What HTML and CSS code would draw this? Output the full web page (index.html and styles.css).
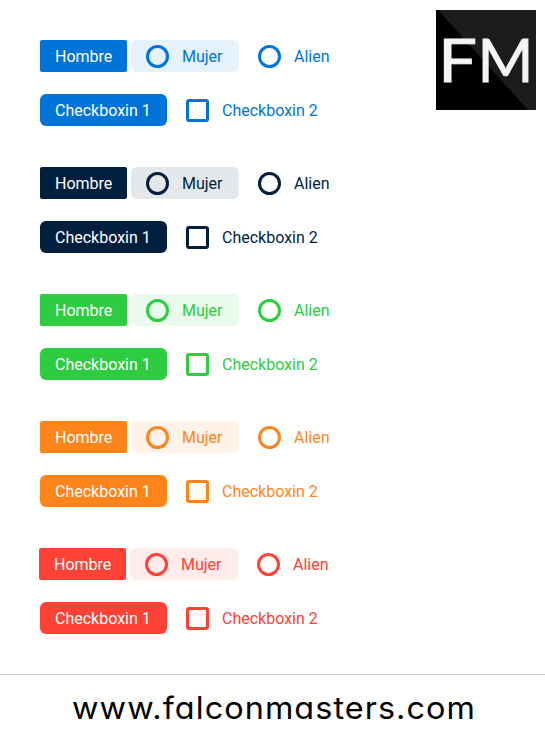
FILE: index.html
```
<!DOCTYPE html>
<html lang="es">
<head>
<meta charset="utf-8">
<title>FalconMasters</title>
<link rel="stylesheet" href="styles.css">
</head>
<body>
<svg class="logo" width="100" height="100" viewBox="0 0 100 100" role="img" aria-label="FM">
  <rect width="100" height="100" fill="#1c1c1c"/>
  <path d="M0 0H2L92 100H0Z" fill="#000"/>
  <text class="logo-text" x="2" y="71.5" textLength="39" lengthAdjust="spacingAndGlyphs">F</text>
  <text class="logo-text" x="41.5" y="71.5" textLength="56" lengthAdjust="spacingAndGlyphs">M</text>
</svg>
<main class="groups">
  <section class="group blue">
    <div class="row"><span class="option radio selected">Hombre</span><span class="option radio hover"><i class="mark"></i>Mujer</span><span class="option radio"><i class="mark"></i>Alien</span></div>
    <div class="row"><span class="option check selected">Checkboxin 1</span><span class="option check"><i class="mark"></i>Checkboxin 2</span></div>
  </section>
  <section class="group navy">
    <div class="row"><span class="option radio selected">Hombre</span><span class="option radio hover"><i class="mark"></i>Mujer</span><span class="option radio"><i class="mark"></i>Alien</span></div>
    <div class="row"><span class="option check selected">Checkboxin 1</span><span class="option check"><i class="mark"></i>Checkboxin 2</span></div>
  </section>
  <section class="group green">
    <div class="row"><span class="option radio selected">Hombre</span><span class="option radio hover"><i class="mark"></i>Mujer</span><span class="option radio"><i class="mark"></i>Alien</span></div>
    <div class="row"><span class="option check selected">Checkboxin 1</span><span class="option check"><i class="mark"></i>Checkboxin 2</span></div>
  </section>
  <section class="group orange">
    <div class="row"><span class="option radio selected">Hombre</span><span class="option radio hover"><i class="mark"></i>Mujer</span><span class="option radio"><i class="mark"></i>Alien</span></div>
    <div class="row"><span class="option check selected">Checkboxin 1</span><span class="option check"><i class="mark"></i>Checkboxin 2</span></div>
  </section>
  <section class="group red">
    <div class="row"><span class="option radio selected">Hombre</span><span class="option radio hover"><i class="mark"></i>Mujer</span><span class="option radio"><i class="mark"></i>Alien</span></div>
    <div class="row"><span class="option check selected">Checkboxin 1</span><span class="option check"><i class="mark"></i>Checkboxin 2</span></div>
  </section>
</main>
<footer class="footer"><span class="site">www.falconmasters.com</span></footer>
</body>
</html>
```
FILE: styles.css
```
* { box-sizing: border-box; }
body {
  margin: 0;
  height: 740px;
  overflow: hidden;
  background: #fff;
  font: 16px/32px Roboto, sans-serif;
  display: flex;
  flex-direction: column;
}
.logo { position: absolute; top: 10px; right: 9px; }
.logo-text { font: 400 60px Lato, sans-serif; fill: #f4f4f4; stroke: #f4f4f4; stroke-width: 0.8px; }
.groups {
  height: 674px;
  padding: 40px 40px 0;
  display: flex;
  flex-direction: column;
  gap: 41px;
}
.group { display: flex; flex-direction: column; gap: 22px; color: var(--main); }
.row { display: flex; gap: 4px; height: 32px; line-height: 30px; }
.option {
  display: flex;
  align-items: center;
  gap: 13px;
  padding: 2px 15px 0;
  border-radius: 6px;
  white-space: nowrap;
}
.radio.selected { width: 87px; border-radius: 2px; }
.radio.hover { width: 108px; background: var(--tint); }
.check.selected { width: 127px; }
.selected { background: var(--main); color: #fff; }
.mark { width: 23px; height: 23px; margin-top: -1px; border: 3px solid var(--main); flex: none; }
.radio .mark { border-radius: 50%; }
.check .mark { border-radius: 3px; background: #fff; }
.blue { --main: #0074d9; --tint: #e5f1fb; }
.navy { --main: #001f3f; --tint: #e5e8eb; }
.green { --main: #2ecc40; --tint: #eafaec; }
.orange { --main: #ff851b; --tint: #fff2e8; }
.red { --main: #ff4136; --tint: #ffecea; }
.red .row:first-child { margin-left: -1px; }
.footer {
  height: 66px;
  border-top: 1px solid #ced2d7;
  padding-left: 72px;
  font: 400 31px/65px Inter, sans-serif;
  font-feature-settings: "cv11";
  letter-spacing: 1px;
  white-space: nowrap;
  color: #000;
}
.site { display: inline-block; transform: scaleX(1.046); transform-origin: left; }
```
